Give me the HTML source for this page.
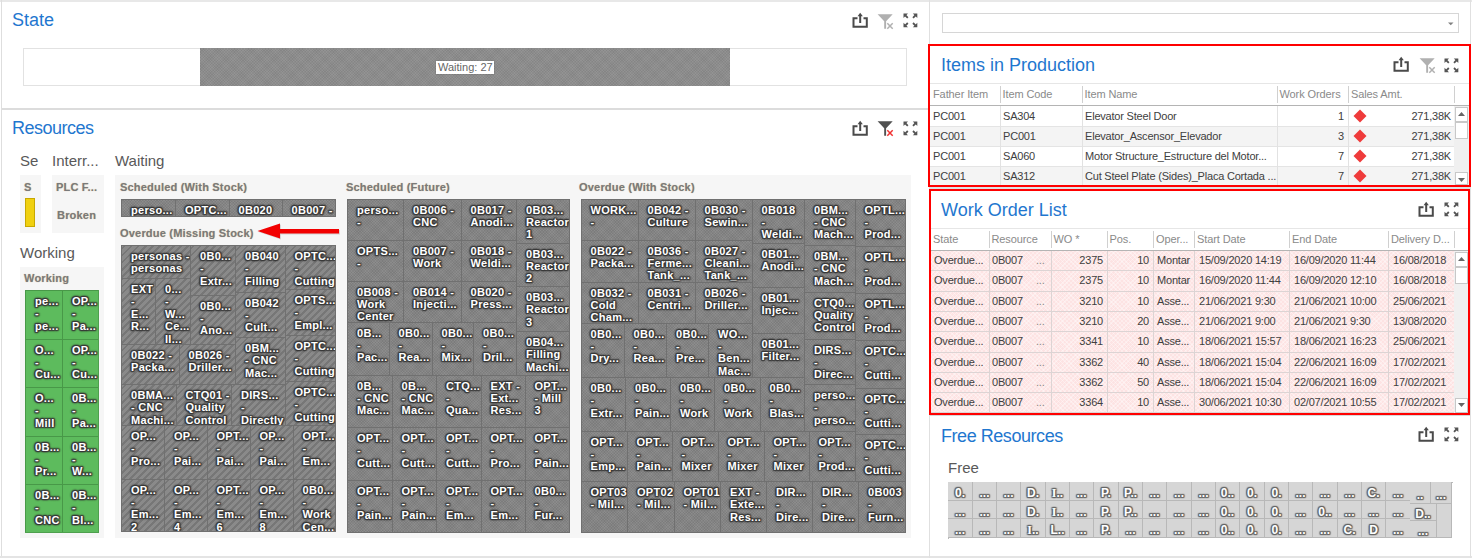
<!DOCTYPE html><html><head><meta charset="utf-8"><style>
*{margin:0;padding:0;box-sizing:border-box}
html,body{width:1472px;height:558px;overflow:hidden;background:#fff;font-family:"Liberation Sans",sans-serif}
.a{position:absolute}
.title{position:absolute;font-size:18px;line-height:20px;color:#1f77cf;white-space:nowrap}
.gt{position:absolute;font-size:15px;line-height:17px;color:#595959;white-space:nowrap}
.grp{position:absolute;background:#f6f6f6}
.sub{position:absolute;font-size:11px;font-weight:bold;line-height:12px;letter-spacing:0.2px;color:#7a7a7a;white-space:nowrap;text-shadow:0 0 1px #d0b890}
.c{position:absolute;border-left:1px solid #707070;border-top:1px solid #707070;overflow:hidden;
 background-color:#8c8c8c;
 background-image:repeating-linear-gradient(45deg,rgba(0,0,0,.06) 0 1px,transparent 1px 2px),repeating-linear-gradient(-45deg,rgba(0,0,0,.06) 0 1px,transparent 1px 2px)}
.h{background-color:#8a8a8a;background-image:repeating-linear-gradient(-45deg,transparent 0 3px,rgba(50,50,50,.22) 3px 5px)}
.g{background-color:#5dbb5d;background-image:none;border-color:#489848}
.tx{position:absolute;left:9px;top:4px;font-size:11px;font-weight:bold;line-height:12.4px;letter-spacing:0.3px;color:#fff;white-space:pre;
 text-shadow:1px 0 1.3px #383838,-1px 0 1.3px #383838,0 1px 1.3px #383838,0 -1px 1.3px #383838,1px 1px 1.3px #383838,-1px -1px 1.3px #383838,1px -1px 1.3px #383838,-1px 1px 1.3px #383838}
.tm{position:absolute;border-right:1px solid #707070;border-bottom:1px solid #707070}
.grid{position:absolute;font-size:11px;color:#3c3c3c;white-space:nowrap}
.hd{position:absolute;font-size:11px;color:#8a8a8a;white-space:nowrap;letter-spacing:-0.1px}
.cell{position:absolute;font-size:11px;line-height:20px;color:#404040;white-space:nowrap;letter-spacing:-0.2px}
.r{text-align:right}
.fc{position:absolute;background:#d6d6d6;border-right:1px solid #b8b8b8;border-bottom:1px solid #b8b8b8;overflow:hidden}
.ft{position:absolute;left:0;right:0;text-align:center;font-size:12px;font-weight:bold;color:#fff;line-height:12px;
 text-shadow:1px 0 1px #666,-1px 0 1px #666,0 1px 1px #666,0 -1px 1px #666,1px 1px 1px #666,-1px -1px 1px #666,1px -1px 1px #666,-1px 1px 1px #666}
</style></head><body>
<div class="a" style="left:0;top:0;width:1472px;height:2px;background:#e8e8e8"></div>
<div class="a" style="left:1px;top:0;width:1px;height:558px;background:#dedede"></div>
<div class="a" style="left:0;top:556px;width:1472px;height:2px;background:#e4e4e4"></div>
<div class="a" style="left:929px;top:0;width:1px;height:558px;background:#e0e0e0"></div>
<div class="a" style="left:1470px;top:0;width:1px;height:558px;background:#e0e0e0"></div>
<div class="a" style="left:2px;top:108px;width:927px;height:2px;background:#dcdcdc"></div>
<div class="title" style="left:12px;top:10px">State</div>
<svg class="a" style="left:852px;top:12px" width="17" height="17" viewBox="0 0 17 17"><path d="M5.5 6.3H1.5V14.8H14.8V6.3H11.5" fill="none" stroke="#4a4a4a" stroke-width="2"/><path d="M8.2 11V3" fill="none" stroke="#4a4a4a" stroke-width="2"/><path d="M5.6 4.2L8.2 0.8L10.8 4.2Z" fill="#4a4a4a"/></svg>
<svg class="a" style="left:877px;top:13px" width="17" height="17" viewBox="0 0 17 17"><path d="M0.6 1.3H15.7L9.1 8.2V15.7H7.2V8.2Z" fill="#b0b0b0"/><path d="M10.3 10.3L15.7 15.7M15.7 10.3L10.3 15.7" stroke="#b0b0b0" stroke-width="1.5"/></svg>
<svg class="a" style="left:903px;top:13px" width="15" height="15" viewBox="0 0 15 15"><g fill="#555555"><path d="M0.5 0.5H5L0.5 5Z"/><path d="M14.3 0.5H9.8L14.3 5Z"/><path d="M0.5 14.3H5L0.5 9.8Z"/><path d="M14.3 14.3H9.8L14.3 9.8Z"/></g><path d="M2 2L4.8 4.8M12.8 2L10 4.8M2 12.8L4.8 10M12.8 12.8L10 10" stroke="#555555" stroke-width="1.8"/></svg>
<div class="a" style="left:23px;top:48px;width:884px;height:38px;border:1px solid #e2e2e2"></div>
<div class="a" style="left:200px;top:48px;width:530px;height:38px;background:#939393;background-image:repeating-linear-gradient(45deg,rgba(0,0,0,.05) 0 1px,transparent 1px 2px),repeating-linear-gradient(-45deg,rgba(0,0,0,.05) 0 1px,transparent 1px 2px)"></div>
<div class="a" style="left:436px;top:61px;width:58px;height:13px;background:#fff;box-shadow:0 0 1px #555"></div>
<div class="a" style="left:438px;top:60px;font-size:11px;line-height:14px;color:#666">Waiting: 27</div>
<div class="title" style="left:12px;top:118px;letter-spacing:-0.5px">Resources</div>
<svg class="a" style="left:852px;top:120px" width="17" height="17" viewBox="0 0 17 17"><path d="M5.5 6.3H1.5V14.8H14.8V6.3H11.5" fill="none" stroke="#4a4a4a" stroke-width="2"/><path d="M8.2 11V3" fill="none" stroke="#4a4a4a" stroke-width="2"/><path d="M5.6 4.2L8.2 0.8L10.8 4.2Z" fill="#4a4a4a"/></svg>
<svg class="a" style="left:877px;top:120px" width="17" height="17" viewBox="0 0 17 17"><path d="M0.6 1.3H15.7L9.1 8.2V15.7H7.2V8.2Z" fill="#505050"/><path d="M10.3 10.3L15.7 15.7M15.7 10.3L10.3 15.7" stroke="#f03030" stroke-width="1.5"/></svg>
<svg class="a" style="left:903px;top:120.5px" width="15" height="15" viewBox="0 0 15 15"><g fill="#555555"><path d="M0.5 0.5H5L0.5 5Z"/><path d="M14.3 0.5H9.8L14.3 5Z"/><path d="M0.5 14.3H5L0.5 9.8Z"/><path d="M14.3 14.3H9.8L14.3 9.8Z"/></g><path d="M2 2L4.8 4.8M12.8 2L10 4.8M2 12.8L4.8 10M12.8 12.8L10 10" stroke="#555555" stroke-width="1.8"/></svg>
<div class="gt" style="left:20px;top:152px">Se</div>
<div class="gt" style="left:52px;top:152px">Interr...</div>
<div class="gt" style="left:115px;top:152px">Waiting</div>
<div class="gt" style="left:20px;top:244px">Working</div>
<div class="grp" style="left:20px;top:175px;width:21px;height:58px"></div>
<div class="sub" style="left:24px;top:181px">S</div>
<div class="a" style="left:25px;top:198px;width:10px;height:29px;background:#f0d010;border:1px solid #c8a800"></div>
<div class="grp" style="left:52px;top:175px;width:52px;height:58px"></div>
<div class="sub" style="left:56px;top:181px">PLC F...</div>
<div class="sub" style="left:57px;top:209px">Broken</div>
<div class="grp" style="left:20px;top:267px;width:84px;height:271px"></div>
<div class="sub" style="left:24px;top:272px">Working</div>
<div class="grp" style="left:115px;top:175px;width:796px;height:363px"></div>
<div class="sub" style="left:120px;top:181px">Scheduled (With Stock)</div>
<div class="sub" style="left:120px;top:227px">Overdue (Missing Stock)</div>
<div class="sub" style="left:346px;top:181px">Scheduled (Future)</div>
<div class="sub" style="left:579px;top:181px">Overdue (With Stock)</div>
<div class="c " style="left:121px;top:198.5px;width:54px;height:18.5px"><div class="tx">perso...</div></div>
<div class="c " style="left:175px;top:198.5px;width:53.5px;height:18.5px"><div class="tx">OPTC...</div></div>
<div class="c " style="left:228.5px;top:198.5px;width:53.0px;height:18.5px"><div class="tx">0B020</div></div>
<div class="c " style="left:281.5px;top:198.5px;width:54.5px;height:18.5px"><div class="tx">0B007 -</div></div>
<div class="c h" style="left:121px;top:245px;width:69px;height:33px"><div class="tx">personas -
personas</div></div>
<div class="c h" style="left:121px;top:278px;width:34px;height:66px"><div class="tx">EXT
-
E...
R...</div></div>
<div class="c h" style="left:155px;top:278px;width:35px;height:66px"><div class="tx">0...
-
W...
Ce...
II...</div></div>
<div class="c h" style="left:190px;top:245px;width:45px;height:49.5px"><div class="tx">0B0...
-
Extr...</div></div>
<div class="c h" style="left:190px;top:294.5px;width:45px;height:49.5px"><div class="tx">0B0...
-
Ano...</div></div>
<div class="c h" style="left:235px;top:245px;width:49.5px;height:46.5px"><div class="tx">0B040
-
Filling</div></div>
<div class="c h" style="left:235px;top:291.5px;width:49.5px;height:45.5px"><div class="tx">0B042
-
Cult...</div></div>
<div class="c h" style="left:284.5px;top:245px;width:51.5px;height:44px"><div class="tx">OPTC...
-
Cutting</div></div>
<div class="c h" style="left:284.5px;top:289px;width:51.5px;height:46px"><div class="tx">OPTS...
-
Empl...</div></div>
<div class="c h" style="left:121px;top:344px;width:57.5px;height:40px"><div class="tx">0B022 -
Packa...</div></div>
<div class="c h" style="left:178.5px;top:344px;width:56.5px;height:40px"><div class="tx">0B026 -
Driller...</div></div>
<div class="c h" style="left:235px;top:337px;width:49.5px;height:47px"><div class="tx">0BM...
- CNC
Mac...</div></div>
<div class="c h" style="left:284.5px;top:335px;width:51.5px;height:46px"><div class="tx">OPTC...
-
Cutting</div></div>
<div class="c h" style="left:121px;top:384px;width:54.5px;height:41px"><div class="tx">0BMA...
- CNC
Machi...</div></div>
<div class="c h" style="left:175.5px;top:384px;width:55.5px;height:41px"><div class="tx">CTQ01 -
Quality
Control</div></div>
<div class="c h" style="left:231px;top:384px;width:53.5px;height:41px"><div class="tx">DIRS...
-
Directly</div></div>
<div class="c h" style="left:284.5px;top:381px;width:51.5px;height:44px"><div class="tx">OPTC...
-
Cutting</div></div>
<div class="c h" style="left:121px;top:425px;width:43px;height:53.5px"><div class="tx">OP...
-
Pro...</div></div>
<div class="c h" style="left:164px;top:425px;width:42.5px;height:53.5px"><div class="tx">OP...
-
Pai...</div></div>
<div class="c h" style="left:206.5px;top:425px;width:43.0px;height:53.5px"><div class="tx">OPT...
-
Pai...</div></div>
<div class="c h" style="left:249.5px;top:425px;width:43.0px;height:53.5px"><div class="tx">OP...
-
Pai...</div></div>
<div class="c h" style="left:292.5px;top:425px;width:43.5px;height:53.5px"><div class="tx">OPT...
-
Em...</div></div>
<div class="c h" style="left:121px;top:478.5px;width:43px;height:53.5px"><div class="tx">OP...
-
Em...
2</div></div>
<div class="c h" style="left:164px;top:478.5px;width:42.5px;height:53.5px"><div class="tx">OP...
-
Em...
4</div></div>
<div class="c h" style="left:206.5px;top:478.5px;width:43.0px;height:53.5px"><div class="tx">OPT...
-
Em...
6</div></div>
<div class="c h" style="left:249.5px;top:478.5px;width:43.0px;height:53.5px"><div class="tx">OP...
-
Em...
8</div></div>
<div class="c h" style="left:292.5px;top:478.5px;width:43.5px;height:53.5px"><div class="tx">0B0...
-
Work
Cen...</div></div>
<div class="c " style="left:347px;top:198.5px;width:56px;height:41.0px"><div class="tx">perso...
-</div></div>
<div class="c " style="left:403px;top:198.5px;width:57.5px;height:41.0px"><div class="tx">0B006 -
CNC</div></div>
<div class="c " style="left:460.5px;top:198.5px;width:55.5px;height:41.0px"><div class="tx">0B017 -
Anodi...</div></div>
<div class="c " style="left:347px;top:239.5px;width:56px;height:41.0px"><div class="tx">OPTS...
-</div></div>
<div class="c " style="left:403px;top:239.5px;width:57.5px;height:41.0px"><div class="tx">0B007 -
Work</div></div>
<div class="c " style="left:460.5px;top:239.5px;width:55.5px;height:41.0px"><div class="tx">0B018 -
Weldi...</div></div>
<div class="c " style="left:347px;top:280.5px;width:56px;height:41.0px"><div class="tx">0B008 -
Work
Center</div></div>
<div class="c " style="left:403px;top:280.5px;width:57.5px;height:41.0px"><div class="tx">0B014 -
Injecti...</div></div>
<div class="c " style="left:460.5px;top:280.5px;width:55.5px;height:41.0px"><div class="tx">0B020 -
Press...</div></div>
<div class="c " style="left:516px;top:198.5px;width:54px;height:44.0px"><div class="tx">0B03...
Reactor
1</div></div>
<div class="c " style="left:516px;top:242.5px;width:54px;height:43.5px"><div class="tx">0B03...
Reactor
2</div></div>
<div class="c " style="left:516px;top:286px;width:54px;height:45px"><div class="tx">0B03...
Reactor
3</div></div>
<div class="c " style="left:516px;top:331px;width:54px;height:43.5px"><div class="tx">0B04...
Filling
Machi...</div></div>
<div class="c " style="left:347px;top:321.5px;width:41.5px;height:53.0px"><div class="tx">0B...
-
Pac...</div></div>
<div class="c " style="left:388.5px;top:321.5px;width:43.0px;height:53.0px"><div class="tx">0B0...
-
Rea...</div></div>
<div class="c " style="left:431.5px;top:321.5px;width:41.5px;height:53.0px"><div class="tx">0B0...
-
Mix...</div></div>
<div class="c " style="left:473px;top:321.5px;width:43px;height:53.0px"><div class="tx">0B0...
-
Dril...</div></div>
<div class="c " style="left:347px;top:374.5px;width:44.5px;height:52.5px"><div class="tx">0B...
- CNC
Mac...</div></div>
<div class="c " style="left:391.5px;top:374.5px;width:44.5px;height:52.5px"><div class="tx">0B...
- CNC
Mac...</div></div>
<div class="c " style="left:436px;top:374.5px;width:44.5px;height:52.5px"><div class="tx">CTQ...
-
Qua...</div></div>
<div class="c " style="left:480.5px;top:374.5px;width:44.0px;height:52.5px"><div class="tx">EXT -
Ext...
Res...</div></div>
<div class="c " style="left:524.5px;top:374.5px;width:45.5px;height:52.5px"><div class="tx">OPT...
- Mill
3</div></div>
<div class="c " style="left:347px;top:427px;width:44.5px;height:52.5px"><div class="tx">OPT...
-
Cutt...</div></div>
<div class="c " style="left:391.5px;top:427px;width:44.5px;height:52.5px"><div class="tx">OPT...
-
Cutt...</div></div>
<div class="c " style="left:436px;top:427px;width:44.5px;height:52.5px"><div class="tx">OPT...
-
Cutt...</div></div>
<div class="c " style="left:480.5px;top:427px;width:44.0px;height:52.5px"><div class="tx">OPT...
-
Pro...</div></div>
<div class="c " style="left:524.5px;top:427px;width:45.5px;height:52.5px"><div class="tx">OPT...
-
Pain...</div></div>
<div class="c " style="left:347px;top:479.5px;width:44.5px;height:53.0px"><div class="tx">OPT...
-
Pain...</div></div>
<div class="c " style="left:391.5px;top:479.5px;width:44.5px;height:53.0px"><div class="tx">OPT...
-
Pain...</div></div>
<div class="c " style="left:436px;top:479.5px;width:44.5px;height:53.0px"><div class="tx">OPT...
-
Em...</div></div>
<div class="c " style="left:480.5px;top:479.5px;width:44.0px;height:53.0px"><div class="tx">OPT...
-
Em...</div></div>
<div class="c " style="left:524.5px;top:479.5px;width:45.5px;height:53.0px"><div class="tx">0B0...
-
Fur...</div></div>
<div class="c " style="left:580.5px;top:198.5px;width:57.0px;height:41.0px"><div class="tx">WORK...
-</div></div>
<div class="c " style="left:637.5px;top:198.5px;width:57.0px;height:41.0px"><div class="tx">0B042 -
Culture</div></div>
<div class="c " style="left:694.5px;top:198.5px;width:57.0px;height:41.0px"><div class="tx">0B030 -
Sewin...</div></div>
<div class="c " style="left:580.5px;top:239.5px;width:57.0px;height:42.0px"><div class="tx">0B022 -
Packa...</div></div>
<div class="c " style="left:637.5px;top:239.5px;width:57.0px;height:42.0px"><div class="tx">0B036 -
Ferme...
Tank_...</div></div>
<div class="c " style="left:694.5px;top:239.5px;width:57.0px;height:42.0px"><div class="tx">0B027 -
Cleani...
Tank_...</div></div>
<div class="c " style="left:580.5px;top:281.5px;width:57.0px;height:41.0px"><div class="tx">0B032 -
Cold
Cham...</div></div>
<div class="c " style="left:637.5px;top:281.5px;width:57.0px;height:41.0px"><div class="tx">0B031 -
Centri...</div></div>
<div class="c " style="left:694.5px;top:281.5px;width:57.0px;height:41.0px"><div class="tx">0B026 -
Driller...</div></div>
<div class="c " style="left:751.5px;top:198.5px;width:52.5px;height:44.5px"><div class="tx">0B018
-
Weldi...</div></div>
<div class="c " style="left:751.5px;top:243px;width:52.5px;height:44px"><div class="tx">0B01...
Anodi...</div></div>
<div class="c " style="left:751.5px;top:287px;width:52.5px;height:46px"><div class="tx">0B01...
Injec...</div></div>
<div class="c " style="left:751.5px;top:333px;width:52.5px;height:44.5px"><div class="tx">0B01...
Filter...</div></div>
<div class="c " style="left:804px;top:198.5px;width:50.5px;height:46.5px"><div class="tx">0BM...
- CNC
Mach...</div></div>
<div class="c " style="left:804px;top:245px;width:50.5px;height:46.5px"><div class="tx">0BM...
- CNC
Mach...</div></div>
<div class="c " style="left:804px;top:291.5px;width:50.5px;height:47.0px"><div class="tx">CTQ0...
Quality
Control</div></div>
<div class="c " style="left:804px;top:338.5px;width:50.5px;height:45.5px"><div class="tx">DIRS...
-
Direc...</div></div>
<div class="c " style="left:804px;top:384px;width:50.5px;height:46.5px"><div class="tx">perso...
-
perso...</div></div>
<div class="c " style="left:854.5px;top:198.5px;width:51.0px;height:47.0px"><div class="tx">OPTL...
-
Prod...</div></div>
<div class="c " style="left:854.5px;top:245.5px;width:51.0px;height:47.0px"><div class="tx">OPTL...
-
Prod...</div></div>
<div class="c " style="left:854.5px;top:292.5px;width:51.0px;height:47.0px"><div class="tx">OPTL...
-
Prod...</div></div>
<div class="c " style="left:854.5px;top:339.5px;width:51.0px;height:48.0px"><div class="tx">OPTC...
-
Cutti...</div></div>
<div class="c " style="left:854.5px;top:387.5px;width:51.0px;height:46.5px"><div class="tx">OPTC...
-
Cutti...</div></div>
<div class="c " style="left:854.5px;top:434px;width:51.0px;height:47px"><div class="tx">OPTC...
-
Cutti...</div></div>
<div class="c " style="left:580.5px;top:322.5px;width:43.0px;height:54.5px"><div class="tx">0B0...
-
Dry...</div></div>
<div class="c " style="left:623.5px;top:322.5px;width:42.5px;height:54.5px"><div class="tx">0B0...
-
Rea...</div></div>
<div class="c " style="left:666px;top:322.5px;width:42px;height:54.5px"><div class="tx">0B0...
-
Pre...</div></div>
<div class="c " style="left:708px;top:322.5px;width:43.5px;height:54.5px"><div class="tx">WO...
-
Ben...
Mac...</div></div>
<div class="c " style="left:580.5px;top:377px;width:44.5px;height:53.5px"><div class="tx">0B0...
-
Extr...</div></div>
<div class="c " style="left:625px;top:377px;width:45px;height:53.5px"><div class="tx">0B0...
-
Pain...</div></div>
<div class="c " style="left:670px;top:377px;width:44px;height:53.5px"><div class="tx">0B0...
-
Work</div></div>
<div class="c " style="left:714px;top:377px;width:45.5px;height:53.5px"><div class="tx">0B0...
-
Work</div></div>
<div class="c " style="left:759.5px;top:377px;width:44.5px;height:53.5px"><div class="tx">0B0...
-
Blas...</div></div>
<div class="c " style="left:580.5px;top:430.5px;width:46.0px;height:50.5px"><div class="tx">OPT...
-
Emp...</div></div>
<div class="c " style="left:626.5px;top:430.5px;width:45.0px;height:50.5px"><div class="tx">OPT...
-
Pain...</div></div>
<div class="c " style="left:671.5px;top:430.5px;width:46.0px;height:50.5px"><div class="tx">OPT...
-
Mixer</div></div>
<div class="c " style="left:717.5px;top:430.5px;width:46.0px;height:50.5px"><div class="tx">OPT...
-
Mixer</div></div>
<div class="c " style="left:763.5px;top:430.5px;width:45.0px;height:50.5px"><div class="tx">OPT...
-
Mixer</div></div>
<div class="c " style="left:808.5px;top:430.5px;width:46.0px;height:50.5px"><div class="tx">OPT...
-
Prod...</div></div>
<div class="c " style="left:580.5px;top:481px;width:46.5px;height:51.5px"><div class="tx">OPT03
- Mil...</div></div>
<div class="c " style="left:627px;top:481px;width:46.5px;height:51.5px"><div class="tx">OPT02
- Mil...</div></div>
<div class="c " style="left:673.5px;top:481px;width:46.5px;height:51.5px"><div class="tx">OPT01
- Mil...</div></div>
<div class="c " style="left:720px;top:481px;width:46px;height:51.5px"><div class="tx">EXT -
Exte...
Res...</div></div>
<div class="c " style="left:766px;top:481px;width:46px;height:51.5px"><div class="tx">DIR...
-
Dire...</div></div>
<div class="c " style="left:812px;top:481px;width:46px;height:51.5px"><div class="tx">DIR...
-
Dire...</div></div>
<div class="c " style="left:858px;top:481px;width:47.5px;height:51.5px"><div class="tx">0B003
-
Furn...</div></div>
<div class="c g" style="left:25px;top:290px;width:37px;height:48.5px"><div class="tx">pe...
-
pe...</div></div>
<div class="c g" style="left:62px;top:290px;width:37px;height:48.5px"><div class="tx">OP...
-
Pa...</div></div>
<div class="c g" style="left:25px;top:338.5px;width:37px;height:48.5px"><div class="tx">O...
-
Cu...</div></div>
<div class="c g" style="left:62px;top:338.5px;width:37px;height:48.5px"><div class="tx">OP...
-
Cu...</div></div>
<div class="c g" style="left:25px;top:387px;width:37px;height:48.5px"><div class="tx">O...
-
Mill</div></div>
<div class="c g" style="left:62px;top:387px;width:37px;height:48.5px"><div class="tx">0B...
-
Pa...</div></div>
<div class="c g" style="left:25px;top:435.5px;width:37px;height:48.5px"><div class="tx">0B...
-
Pr...</div></div>
<div class="c g" style="left:62px;top:435.5px;width:37px;height:48.5px"><div class="tx">0B...
-
W...</div></div>
<div class="c g" style="left:25px;top:484px;width:37px;height:49px"><div class="tx">0B...
-
CNC</div></div>
<div class="c g" style="left:62px;top:484px;width:37px;height:49px"><div class="tx">0B...
-
Bl...</div></div>
<div class="tm" style="left:121px;top:198.5px;width:215px;height:18.5px"></div>
<div class="tm" style="left:121px;top:245px;width:215px;height:287px"></div>
<div class="tm" style="left:347px;top:198.5px;width:223px;height:334.0px"></div>
<div class="tm" style="left:580.5px;top:198.5px;width:325.0px;height:334.0px"></div>
<div class="tm" style="left:25px;top:290px;width:74px;height:243px;border-color:#4ea04e"></div>
<svg class="a" style="left:255px;top:222px" width="88" height="20" viewBox="0 0 88 20"><path d="M3.5 10L26 2.5V8H85V12.5H26V17.5Z" fill="#999" opacity=".35"/><path d="M2.5 9L25 1.5V7H84V11.5H25V16.5Z" fill="#f20000"/></svg>
<div class="a" style="left:942px;top:13px;width:517px;height:20px;border:1px solid #d6d6d6"></div>
<svg class="a" style="left:1448px;top:22px" width="6" height="4"><path d="M0 0.5H5.5L2.75 3.2Z" fill="#808080"/></svg>
<div class="title" style="left:941px;top:55px">Items in Production</div>
<svg class="a" style="left:1393px;top:56px" width="17" height="17" viewBox="0 0 17 17"><path d="M5.5 6.3H1.5V14.8H14.8V6.3H11.5" fill="none" stroke="#4a4a4a" stroke-width="2"/><path d="M8.2 11V3" fill="none" stroke="#4a4a4a" stroke-width="2"/><path d="M5.6 4.2L8.2 0.8L10.8 4.2Z" fill="#4a4a4a"/></svg>
<svg class="a" style="left:1419px;top:57px" width="17" height="17" viewBox="0 0 17 17"><path d="M0.6 1.3H15.7L9.1 8.2V15.7H7.2V8.2Z" fill="#b0b0b0"/><path d="M10.3 10.3L15.7 15.7M15.7 10.3L10.3 15.7" stroke="#b0b0b0" stroke-width="1.5"/></svg>
<svg class="a" style="left:1444px;top:57.5px" width="15" height="15" viewBox="0 0 15 15"><g fill="#555555"><path d="M0.5 0.5H5L0.5 5Z"/><path d="M14.3 0.5H9.8L14.3 5Z"/><path d="M0.5 14.3H5L0.5 9.8Z"/><path d="M14.3 14.3H9.8L14.3 9.8Z"/></g><path d="M2 2L4.8 4.8M12.8 2L10 4.8M2 12.8L4.8 10M12.8 12.8L10 10" stroke="#555555" stroke-width="1.8"/></svg>
<div class="a" style="left:930px;top:83px;width:539px;height:1px;background:#e6e6e6"></div>
<div class="a" style="left:930px;top:105px;width:539px;height:1px;background:#b4b4b4"></div>
<div class="hd" style="left:933px;top:87px;line-height:14px">Father Item</div>
<div class="hd" style="left:1002.5px;top:87px;line-height:14px">Item Code</div>
<div class="hd" style="left:1084.5px;top:87px;line-height:14px">Item Name</div>
<div class="hd" style="left:1279.5px;top:87px;line-height:14px">Work Orders</div>
<div class="hd" style="left:1351px;top:87px;line-height:14px">Sales Amt.</div>
<div class="a" style="left:999.5px;top:86px;width:1px;height:17px;background:#d0d0d0"></div>
<div class="a" style="left:1081.5px;top:86px;width:1px;height:17px;background:#d0d0d0"></div>
<div class="a" style="left:1276.5px;top:86px;width:1px;height:17px;background:#d0d0d0"></div>
<div class="a" style="left:1348px;top:86px;width:1px;height:17px;background:#d0d0d0"></div>
<div class="a" style="left:1454px;top:86px;width:1px;height:17px;background:#d0d0d0"></div>
<div class="a" style="left:930px;top:106.5px;width:524px;height:20.0px;background:#fff"></div>
<div class="a" style="left:930px;top:125.5px;width:524px;height:1px;background:#e4e4e4"></div>
<div class="cell" style="left:933px;top:105.5px">PC001</div>
<div class="cell" style="left:1003px;top:105.5px">SA304</div>
<div class="cell" style="left:1085px;top:105.5px">Elevator Steel Door</div>
<div class="cell r" style="left:1280px;width:64px;top:105.5px">1</div>
<svg class="a" style="left:1353px;top:108.5px" width="14" height="14"><path d="M7 0.5L13.5 7L7 13.5L0.5 7Z" fill="#ef3b3b"/></svg>
<div class="cell r" style="left:1370px;width:81px;top:105.5px">271,38K</div>
<div class="a" style="left:930px;top:126.5px;width:524px;height:20.0px;background:#f4f4f4"></div>
<div class="a" style="left:930px;top:145.5px;width:524px;height:1px;background:#e4e4e4"></div>
<div class="cell" style="left:933px;top:125.5px">PC001</div>
<div class="cell" style="left:1003px;top:125.5px">PC001</div>
<div class="cell" style="left:1085px;top:125.5px">Elevator_Ascensor_Elevador</div>
<div class="cell r" style="left:1280px;width:64px;top:125.5px">3</div>
<svg class="a" style="left:1353px;top:128.5px" width="14" height="14"><path d="M7 0.5L13.5 7L7 13.5L0.5 7Z" fill="#ef3b3b"/></svg>
<div class="cell r" style="left:1370px;width:81px;top:125.5px">271,38K</div>
<div class="a" style="left:930px;top:146.5px;width:524px;height:20.0px;background:#fff"></div>
<div class="a" style="left:930px;top:165.5px;width:524px;height:1px;background:#e4e4e4"></div>
<div class="cell" style="left:933px;top:145.5px">PC001</div>
<div class="cell" style="left:1003px;top:145.5px">SA060</div>
<div class="cell" style="left:1085px;top:145.5px">Motor Structure_Estructure del Motor...</div>
<div class="cell r" style="left:1280px;width:64px;top:145.5px">7</div>
<svg class="a" style="left:1353px;top:148.5px" width="14" height="14"><path d="M7 0.5L13.5 7L7 13.5L0.5 7Z" fill="#ef3b3b"/></svg>
<div class="cell r" style="left:1370px;width:81px;top:145.5px">271,38K</div>
<div class="a" style="left:930px;top:166.5px;width:524px;height:20.5px;background:#f4f4f4"></div>
<div class="a" style="left:930px;top:186px;width:524px;height:1px;background:#e4e4e4"></div>
<div class="cell" style="left:933px;top:165.5px">PC001</div>
<div class="cell" style="left:1003px;top:165.5px">SA312</div>
<div class="cell" style="left:1085px;top:165.5px">Cut Steel Plate (Sides)_Placa Cortada ...</div>
<div class="cell r" style="left:1280px;width:64px;top:165.5px">7</div>
<svg class="a" style="left:1353px;top:168.5px" width="14" height="14"><path d="M7 0.5L13.5 7L7 13.5L0.5 7Z" fill="#ef3b3b"/></svg>
<div class="cell r" style="left:1370px;width:81px;top:165.5px">271,38K</div>
<div class="a" style="left:999.5px;top:106px;width:1px;height:81px;background:#e2e2e2"></div>
<div class="a" style="left:1081.5px;top:106px;width:1px;height:81px;background:#e2e2e2"></div>
<div class="a" style="left:1276.5px;top:106px;width:1px;height:81px;background:#e2e2e2"></div>
<div class="a" style="left:1348px;top:106px;width:1px;height:81px;background:#e2e2e2"></div>
<div class="a" style="left:1454px;top:106px;width:1px;height:81px;background:#e2e2e2"></div>
<div class="a" style="left:1454px;top:106px;width:15px;height:81px;background:#f0f0f0"></div>
<div class="a" style="left:1455px;top:107px;width:13px;height:15px;border:1px solid #c8c8c8;background:#fff"></div>
<svg class="a" style="left:1458px;top:112px" width="7" height="4"><path d="M0 4H7L3.5 0Z" fill="#666"/></svg>
<div class="a" style="left:1455px;top:122px;width:13px;height:17px;border:1px solid #c8c8c8;background:#fff"></div>
<div class="a" style="left:1455px;top:172px;width:13px;height:13px;border:1px solid #c8c8c8;background:#fff"></div>
<svg class="a" style="left:1458px;top:178px" width="7" height="4"><path d="M0 0H7L3.5 4Z" fill="#666"/></svg>
<div class="a" style="left:928px;top:44px;width:543px;height:143px;border:2px solid #ff0000;z-index:5"></div>
<div class="a" style="left:930px;top:187px;width:540px;height:2px;background:#dde3e4"></div>
<div class="title" style="left:941px;top:200px">Work Order List</div>
<svg class="a" style="left:1418px;top:201px" width="17" height="17" viewBox="0 0 17 17"><path d="M5.5 6.3H1.5V14.8H14.8V6.3H11.5" fill="none" stroke="#4a4a4a" stroke-width="2"/><path d="M8.2 11V3" fill="none" stroke="#4a4a4a" stroke-width="2"/><path d="M5.6 4.2L8.2 0.8L10.8 4.2Z" fill="#4a4a4a"/></svg>
<svg class="a" style="left:1444px;top:202px" width="15" height="15" viewBox="0 0 15 15"><g fill="#555555"><path d="M0.5 0.5H5L0.5 5Z"/><path d="M14.3 0.5H9.8L14.3 5Z"/><path d="M0.5 14.3H5L0.5 9.8Z"/><path d="M14.3 14.3H9.8L14.3 9.8Z"/></g><path d="M2 2L4.8 4.8M12.8 2L10 4.8M2 12.8L4.8 10M12.8 12.8L10 10" stroke="#555555" stroke-width="1.8"/></svg>
<div class="a" style="left:930px;top:228px;width:539px;height:1px;background:#e6e6e6"></div>
<div class="a" style="left:930px;top:250px;width:539px;height:1px;background:#b4b4b4"></div>
<div class="hd" style="left:933px;top:232px;line-height:14px">State</div>
<div class="hd" style="left:991.5px;top:232px;line-height:14px">Resource</div>
<div class="hd" style="left:1053.5px;top:232px;line-height:14px">WO *</div>
<div class="hd" style="left:1109.5px;top:232px;line-height:14px">Pos.</div>
<div class="hd" style="left:1156px;top:232px;line-height:14px">Oper...</div>
<div class="hd" style="left:1197px;top:232px;line-height:14px">Start Date</div>
<div class="hd" style="left:1292px;top:232px;line-height:14px">End Date</div>
<div class="hd" style="left:1391px;top:232px;line-height:14px">Delivery D...</div>
<div class="a" style="left:988.5px;top:231px;width:1px;height:17px;background:#d0d0d0"></div>
<div class="a" style="left:1050.5px;top:231px;width:1px;height:17px;background:#d0d0d0"></div>
<div class="a" style="left:1106.5px;top:231px;width:1px;height:17px;background:#d0d0d0"></div>
<div class="a" style="left:1153px;top:231px;width:1px;height:17px;background:#d0d0d0"></div>
<div class="a" style="left:1194px;top:231px;width:1px;height:17px;background:#d0d0d0"></div>
<div class="a" style="left:1289px;top:231px;width:1px;height:17px;background:#d0d0d0"></div>
<div class="a" style="left:1388px;top:231px;width:1px;height:17px;background:#d0d0d0"></div>
<div class="a" style="left:1454px;top:231px;width:1px;height:17px;background:#d0d0d0"></div>
<div class="a" style="left:930px;top:251px;width:524px;height:163px;background:#fde3e3;background-image:repeating-linear-gradient(45deg,rgba(255,255,255,.35) 0 1px,transparent 1px 3px),repeating-linear-gradient(-45deg,rgba(255,255,255,.35) 0 1px,transparent 1px 3px)"></div>
<div class="a" style="left:930px;top:270.3px;width:524px;height:1px;background:#dcd4d4"></div>
<div class="cell" style="left:934px;top:250.0px">Overdue...</div>
<div class="cell" style="left:992px;top:250.0px">0B007</div>
<div class="cell" style="left:1036px;top:250.0px;color:#888">...</div>
<div class="cell r" style="left:1054px;width:49px;top:250.0px">2375</div>
<div class="cell r" style="left:1110px;width:39px;top:250.0px">10</div>
<div class="cell" style="left:1157px;top:250.0px">Montar</div>
<div class="cell" style="left:1199px;top:250.0px">15/09/2020 14:19</div>
<div class="cell" style="left:1294px;top:250.0px">16/09/2020 11:44</div>
<div class="cell" style="left:1393px;top:250.0px">16/08/2018</div>
<div class="a" style="left:930px;top:290.6px;width:524px;height:1px;background:#dcd4d4"></div>
<div class="cell" style="left:934px;top:270.3px">Overdue...</div>
<div class="cell" style="left:992px;top:270.3px">0B007</div>
<div class="cell" style="left:1036px;top:270.3px;color:#888">...</div>
<div class="cell r" style="left:1054px;width:49px;top:270.3px">2375</div>
<div class="cell r" style="left:1110px;width:39px;top:270.3px">10</div>
<div class="cell" style="left:1157px;top:270.3px">Montar</div>
<div class="cell" style="left:1199px;top:270.3px">16/09/2020 11:44</div>
<div class="cell" style="left:1294px;top:270.3px">16/09/2020 12:10</div>
<div class="cell" style="left:1393px;top:270.3px">16/08/2018</div>
<div class="a" style="left:930px;top:310.9px;width:524px;height:1px;background:#dcd4d4"></div>
<div class="cell" style="left:934px;top:290.6px">Overdue...</div>
<div class="cell" style="left:992px;top:290.6px">0B007</div>
<div class="cell" style="left:1036px;top:290.6px;color:#888">...</div>
<div class="cell r" style="left:1054px;width:49px;top:290.6px">3210</div>
<div class="cell r" style="left:1110px;width:39px;top:290.6px">10</div>
<div class="cell" style="left:1157px;top:290.6px">Asse...</div>
<div class="cell" style="left:1199px;top:290.6px">21/06/2021 9:30</div>
<div class="cell" style="left:1294px;top:290.6px">21/06/2021 10:00</div>
<div class="cell" style="left:1393px;top:290.6px">25/06/2021</div>
<div class="a" style="left:930px;top:331.2px;width:524px;height:1px;background:#dcd4d4"></div>
<div class="cell" style="left:934px;top:310.9px">Overdue...</div>
<div class="cell" style="left:992px;top:310.9px">0B007</div>
<div class="cell" style="left:1036px;top:310.9px;color:#888">...</div>
<div class="cell r" style="left:1054px;width:49px;top:310.9px">3210</div>
<div class="cell r" style="left:1110px;width:39px;top:310.9px">20</div>
<div class="cell" style="left:1157px;top:310.9px">Asse...</div>
<div class="cell" style="left:1199px;top:310.9px">21/06/2021 9:00</div>
<div class="cell" style="left:1294px;top:310.9px">21/06/2021 9:30</div>
<div class="cell" style="left:1393px;top:310.9px">13/08/2020</div>
<div class="a" style="left:930px;top:351.5px;width:524px;height:1px;background:#dcd4d4"></div>
<div class="cell" style="left:934px;top:331.2px">Overdue...</div>
<div class="cell" style="left:992px;top:331.2px">0B007</div>
<div class="cell" style="left:1036px;top:331.2px;color:#888">...</div>
<div class="cell r" style="left:1054px;width:49px;top:331.2px">3341</div>
<div class="cell r" style="left:1110px;width:39px;top:331.2px">10</div>
<div class="cell" style="left:1157px;top:331.2px">Asse...</div>
<div class="cell" style="left:1199px;top:331.2px">18/06/2021 15:57</div>
<div class="cell" style="left:1294px;top:331.2px">18/06/2021 16:23</div>
<div class="cell" style="left:1393px;top:331.2px">25/06/2021</div>
<div class="a" style="left:930px;top:371.8px;width:524px;height:1px;background:#dcd4d4"></div>
<div class="cell" style="left:934px;top:351.5px">Overdue...</div>
<div class="cell" style="left:992px;top:351.5px">0B007</div>
<div class="cell" style="left:1036px;top:351.5px;color:#888">...</div>
<div class="cell r" style="left:1054px;width:49px;top:351.5px">3362</div>
<div class="cell r" style="left:1110px;width:39px;top:351.5px">40</div>
<div class="cell" style="left:1157px;top:351.5px">Asse...</div>
<div class="cell" style="left:1199px;top:351.5px">18/06/2021 15:04</div>
<div class="cell" style="left:1294px;top:351.5px">22/06/2021 16:09</div>
<div class="cell" style="left:1393px;top:351.5px">17/02/2021</div>
<div class="a" style="left:930px;top:392.1px;width:524px;height:1px;background:#dcd4d4"></div>
<div class="cell" style="left:934px;top:371.8px">Overdue...</div>
<div class="cell" style="left:992px;top:371.8px">0B007</div>
<div class="cell" style="left:1036px;top:371.8px;color:#888">...</div>
<div class="cell r" style="left:1054px;width:49px;top:371.8px">3362</div>
<div class="cell r" style="left:1110px;width:39px;top:371.8px">50</div>
<div class="cell" style="left:1157px;top:371.8px">Asse...</div>
<div class="cell" style="left:1199px;top:371.8px">18/06/2021 15:04</div>
<div class="cell" style="left:1294px;top:371.8px">22/06/2021 16:09</div>
<div class="cell" style="left:1393px;top:371.8px">17/02/2021</div>
<div class="a" style="left:930px;top:412.4px;width:524px;height:1px;background:#dcd4d4"></div>
<div class="cell" style="left:934px;top:392.1px">Overdue...</div>
<div class="cell" style="left:992px;top:392.1px">0B007</div>
<div class="cell" style="left:1036px;top:392.1px;color:#888">...</div>
<div class="cell r" style="left:1054px;width:49px;top:392.1px">3364</div>
<div class="cell r" style="left:1110px;width:39px;top:392.1px">10</div>
<div class="cell" style="left:1157px;top:392.1px">Asse...</div>
<div class="cell" style="left:1199px;top:392.1px">30/06/2021 10:30</div>
<div class="cell" style="left:1294px;top:392.1px">02/07/2021 10:55</div>
<div class="cell" style="left:1393px;top:392.1px">17/02/2021</div>
<div class="a" style="left:988.5px;top:251px;width:1px;height:163px;background:#dcd4d4"></div>
<div class="a" style="left:1050.5px;top:251px;width:1px;height:163px;background:#dcd4d4"></div>
<div class="a" style="left:1106.5px;top:251px;width:1px;height:163px;background:#dcd4d4"></div>
<div class="a" style="left:1153px;top:251px;width:1px;height:163px;background:#dcd4d4"></div>
<div class="a" style="left:1194px;top:251px;width:1px;height:163px;background:#dcd4d4"></div>
<div class="a" style="left:1289px;top:251px;width:1px;height:163px;background:#dcd4d4"></div>
<div class="a" style="left:1388px;top:251px;width:1px;height:163px;background:#dcd4d4"></div>
<div class="a" style="left:1454px;top:251px;width:1px;height:163px;background:#dcd4d4"></div>
<div class="a" style="left:1454px;top:251px;width:14px;height:163px;background:#f0f0f0"></div>
<div class="a" style="left:1455px;top:252px;width:13px;height:15px;border:1px solid #c8c8c8;background:#fff"></div>
<svg class="a" style="left:1458px;top:257px" width="7" height="4"><path d="M0 4H7L3.5 0Z" fill="#666"/></svg>
<div class="a" style="left:1455px;top:267px;width:13px;height:17px;border:1px solid #c8c8c8;background:#fff"></div>
<div class="a" style="left:1455px;top:398px;width:13px;height:15px;border:1px solid #c8c8c8;background:#fff"></div>
<svg class="a" style="left:1458px;top:403px" width="7" height="4"><path d="M0 0H7L3.5 4Z" fill="#666"/></svg>
<div class="a" style="left:929px;top:189px;width:541px;height:226px;border:2px solid #ff0000;z-index:5"></div>
<div class="a" style="left:930px;top:415px;width:540px;height:1px;background:#d8d8d8"></div>
<div class="title" style="left:941px;top:426px;letter-spacing:-0.45px">Free Resources</div>
<svg class="a" style="left:1418px;top:426px" width="17" height="17" viewBox="0 0 17 17"><path d="M5.5 6.3H1.5V14.8H14.8V6.3H11.5" fill="none" stroke="#4a4a4a" stroke-width="2"/><path d="M8.2 11V3" fill="none" stroke="#4a4a4a" stroke-width="2"/><path d="M5.6 4.2L8.2 0.8L10.8 4.2Z" fill="#4a4a4a"/></svg>
<svg class="a" style="left:1444px;top:427px" width="15" height="15" viewBox="0 0 15 15"><g fill="#555555"><path d="M0.5 0.5H5L0.5 5Z"/><path d="M14.3 0.5H9.8L14.3 5Z"/><path d="M0.5 14.3H5L0.5 9.8Z"/><path d="M14.3 14.3H9.8L14.3 9.8Z"/></g><path d="M2 2L4.8 4.8M12.8 2L10 4.8M2 12.8L4.8 10M12.8 12.8L10 10" stroke="#555555" stroke-width="1.8"/></svg>
<div class="gt" style="left:948px;top:459px">Free</div>
<div class="a" style="left:948px;top:482px;width:505px;height:57px;border-left:1px solid #b8b8b8;border-top:1px solid #b8b8b8"></div>
<div class="fc" style="left:948px;top:482px;width:25px;height:19px"><div class="ft" style="top:5.0px">0.</div></div>
<div class="fc" style="left:948px;top:501px;width:25px;height:18px"><div class="ft" style="top:4.5px">...</div></div>
<div class="fc" style="left:948px;top:519px;width:25px;height:19px"><div class="ft" style="top:5.0px">...</div></div>
<div class="fc" style="left:973px;top:482px;width:24px;height:19px"><div class="ft" style="top:5.0px">...</div></div>
<div class="fc" style="left:973px;top:501px;width:24px;height:18px"><div class="ft" style="top:4.5px">...</div></div>
<div class="fc" style="left:973px;top:519px;width:24px;height:19px"><div class="ft" style="top:5.0px">...</div></div>
<div class="fc" style="left:997px;top:482px;width:24px;height:19px"><div class="ft" style="top:5.0px">...</div></div>
<div class="fc" style="left:997px;top:501px;width:24px;height:18px"><div class="ft" style="top:4.5px">...</div></div>
<div class="fc" style="left:997px;top:519px;width:24px;height:19px"><div class="ft" style="top:5.0px">...</div></div>
<div class="fc" style="left:1021px;top:482px;width:25px;height:19px"><div class="ft" style="top:5.0px">D.</div></div>
<div class="fc" style="left:1021px;top:501px;width:25px;height:18px"><div class="ft" style="top:4.5px">D.</div></div>
<div class="fc" style="left:1021px;top:519px;width:25px;height:19px"><div class="ft" style="top:5.0px"><span style="font-family:'Liberation Serif'">I</span>..</div></div>
<div class="fc" style="left:1046px;top:482px;width:24px;height:19px"><div class="ft" style="top:5.0px"><span style="font-family:'Liberation Serif'">I</span>..</div></div>
<div class="fc" style="left:1046px;top:501px;width:24px;height:18px"><div class="ft" style="top:4.5px"><span style="font-family:'Liberation Serif'">I</span>..</div></div>
<div class="fc" style="left:1046px;top:519px;width:24px;height:19px"><div class="ft" style="top:5.0px">L..</div></div>
<div class="fc" style="left:1070px;top:482px;width:24px;height:19px"><div class="ft" style="top:5.0px">...</div></div>
<div class="fc" style="left:1070px;top:501px;width:24px;height:18px"><div class="ft" style="top:4.5px">...</div></div>
<div class="fc" style="left:1070px;top:519px;width:24px;height:19px"><div class="ft" style="top:5.0px">...</div></div>
<div class="fc" style="left:1094px;top:482px;width:25px;height:19px"><div class="ft" style="top:5.0px">P.</div></div>
<div class="fc" style="left:1094px;top:501px;width:25px;height:18px"><div class="ft" style="top:4.5px">P.</div></div>
<div class="fc" style="left:1094px;top:519px;width:25px;height:19px"><div class="ft" style="top:5.0px">P.</div></div>
<div class="fc" style="left:1119px;top:482px;width:24px;height:19px"><div class="ft" style="top:5.0px">P..</div></div>
<div class="fc" style="left:1119px;top:501px;width:24px;height:18px"><div class="ft" style="top:4.5px">P..</div></div>
<div class="fc" style="left:1119px;top:519px;width:24px;height:19px"><div class="ft" style="top:5.0px">...</div></div>
<div class="fc" style="left:1143px;top:482px;width:24px;height:19px"><div class="ft" style="top:5.0px">...</div></div>
<div class="fc" style="left:1143px;top:501px;width:24px;height:18px"><div class="ft" style="top:4.5px">...</div></div>
<div class="fc" style="left:1143px;top:519px;width:24px;height:19px"><div class="ft" style="top:5.0px">...</div></div>
<div class="fc" style="left:1167px;top:482px;width:25px;height:19px"><div class="ft" style="top:5.0px">...</div></div>
<div class="fc" style="left:1167px;top:501px;width:25px;height:18px"><div class="ft" style="top:4.5px">...</div></div>
<div class="fc" style="left:1167px;top:519px;width:25px;height:19px"><div class="ft" style="top:5.0px">...</div></div>
<div class="fc" style="left:1192px;top:482px;width:24px;height:19px"><div class="ft" style="top:5.0px">...</div></div>
<div class="fc" style="left:1192px;top:501px;width:24px;height:18px"><div class="ft" style="top:4.5px">...</div></div>
<div class="fc" style="left:1192px;top:519px;width:24px;height:19px"><div class="ft" style="top:5.0px">...</div></div>
<div class="fc" style="left:1216px;top:482px;width:24px;height:19px"><div class="ft" style="top:5.0px">0..</div></div>
<div class="fc" style="left:1216px;top:501px;width:24px;height:18px"><div class="ft" style="top:4.5px">0..</div></div>
<div class="fc" style="left:1216px;top:519px;width:24px;height:19px"><div class="ft" style="top:5.0px">0..</div></div>
<div class="fc" style="left:1240px;top:482px;width:25px;height:19px"><div class="ft" style="top:5.0px">0.</div></div>
<div class="fc" style="left:1240px;top:501px;width:25px;height:18px"><div class="ft" style="top:4.5px">0.</div></div>
<div class="fc" style="left:1240px;top:519px;width:25px;height:19px"><div class="ft" style="top:5.0px">0.</div></div>
<div class="fc" style="left:1265px;top:482px;width:24px;height:19px"><div class="ft" style="top:5.0px">0.</div></div>
<div class="fc" style="left:1265px;top:501px;width:24px;height:18px"><div class="ft" style="top:4.5px">0.</div></div>
<div class="fc" style="left:1265px;top:519px;width:24px;height:19px"><div class="ft" style="top:5.0px">0.</div></div>
<div class="fc" style="left:1289px;top:482px;width:24px;height:19px"><div class="ft" style="top:5.0px">...</div></div>
<div class="fc" style="left:1289px;top:501px;width:24px;height:18px"><div class="ft" style="top:4.5px">...</div></div>
<div class="fc" style="left:1289px;top:519px;width:24px;height:19px"><div class="ft" style="top:5.0px">...</div></div>
<div class="fc" style="left:1313px;top:482px;width:25px;height:19px"><div class="ft" style="top:5.0px">...</div></div>
<div class="fc" style="left:1313px;top:501px;width:25px;height:18px"><div class="ft" style="top:4.5px">0..</div></div>
<div class="fc" style="left:1313px;top:519px;width:25px;height:19px"><div class="ft" style="top:5.0px">...</div></div>
<div class="fc" style="left:1338px;top:482px;width:24px;height:19px"><div class="ft" style="top:5.0px">...</div></div>
<div class="fc" style="left:1338px;top:501px;width:24px;height:18px"><div class="ft" style="top:4.5px">...</div></div>
<div class="fc" style="left:1338px;top:519px;width:24px;height:19px"><div class="ft" style="top:5.0px">C.</div></div>
<div class="fc" style="left:1362px;top:482px;width:24px;height:19px"><div class="ft" style="top:5.0px">C.</div></div>
<div class="fc" style="left:1362px;top:501px;width:24px;height:18px"><div class="ft" style="top:4.5px">...</div></div>
<div class="fc" style="left:1362px;top:519px;width:24px;height:19px"><div class="ft" style="top:5.0px">D</div></div>
<div class="fc" style="left:1386px;top:482px;width:25px;height:19px"><div class="ft" style="top:5.0px">...</div></div>
<div class="fc" style="left:1386px;top:501px;width:25px;height:18px"><div class="ft" style="top:4.5px">...</div></div>
<div class="fc" style="left:1386px;top:519px;width:25px;height:19px"><div class="ft" style="top:5.0px">...</div></div>
<div class="fc" style="left:1410px;top:482px;width:21px;height:22px"><div class="ft" style="top:6.5px">..</div></div>
<div class="fc" style="left:1431px;top:482px;width:21px;height:22px"><div class="ft" style="top:6.5px">...</div></div>
<div class="fc" style="left:1410px;top:504px;width:27px;height:17px"><div class="ft" style="top:4.0px">D..</div></div>
<div class="fc" style="left:1410px;top:521px;width:27px;height:17px"><div class="ft" style="top:4.0px">...</div></div>
<div class="fc" style="left:1437px;top:504px;width:15px;height:34px"><div class="ft" style="top:12.5px"></div></div>
</body></html>
